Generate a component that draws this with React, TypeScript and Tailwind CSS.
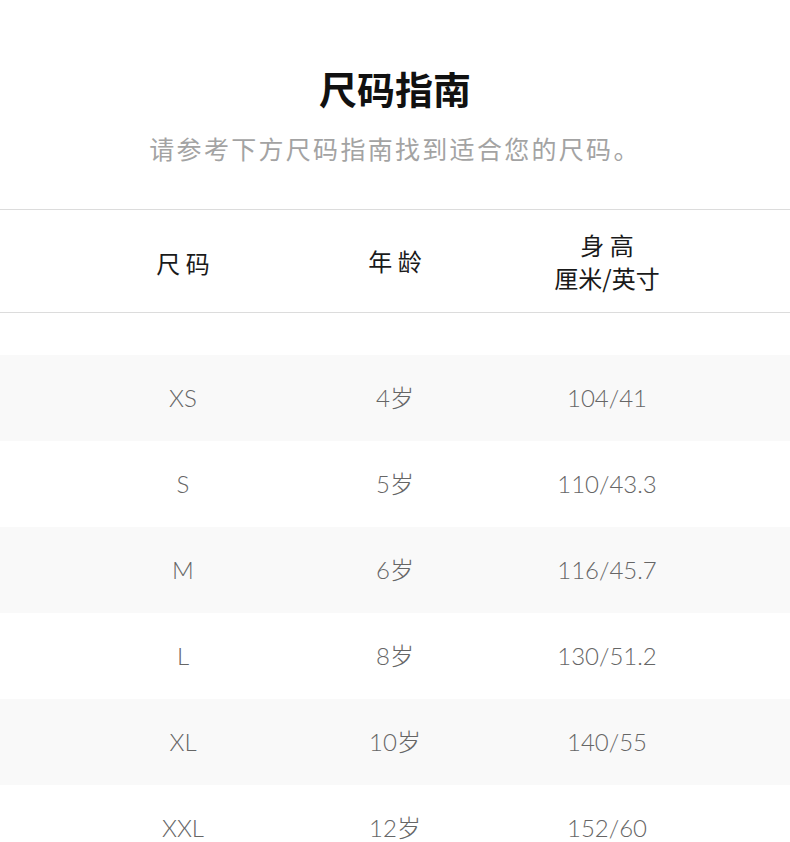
const rows = [
  { size: 'XS', age: '4岁', height: '104/41' },
  { size: 'S', age: '5岁', height: '110/43.3' },
  { size: 'M', age: '6岁', height: '116/45.7' },
  { size: 'L', age: '8岁', height: '130/51.2' },
  { size: 'XL', age: '10岁', height: '140/55' },
  { size: 'XXL', age: '12岁', height: '152/60' },
];

export default function App() {
  return (
    <div className="min-h-screen bg-white font-['Noto_Sans_CJK_SC','Noto_Sans',sans-serif]">
      <div className="pt-[62px] pb-[43px] text-center">
        <h1 className="text-[38px] leading-[52px] font-bold text-[#111]">尺码指南</h1>
        <p className="mt-4 text-[25px] leading-[36px] tracking-[2.3px] text-[#a3a3a3]">
          请参考下方尺码指南找到适合您的尺码。
        </p>
      </div>

      <div className="grid h-[104px] grid-cols-3 items-center border-y border-[#dcdcdc] px-[77px] text-center text-[24px] text-[#1a1a1a]">
        <div className="pt-1">尺 码</div>
        <div>年 龄</div>
        <div className="leading-[33px]">
          <div>身 高</div>
          <div>厘米/英寸</div>
        </div>
      </div>

      <div className="mt-[42px]">
        {rows.map((row, i) => (
          <div
            key={row.size}
            className={`grid h-[86px] grid-cols-3 items-center px-[77px] text-center text-[24px] font-light text-[#666] font-['Lato','Noto_Sans_CJK_SC',sans-serif] ${
              i % 2 === 0 ? 'bg-[#f9f9f9]' : 'bg-white'
            }`}
          >
            <div>{row.size}</div>
            <div>{row.age}</div>
            <div>{row.height}</div>
          </div>
        ))}
      </div>
    </div>
  );
}
